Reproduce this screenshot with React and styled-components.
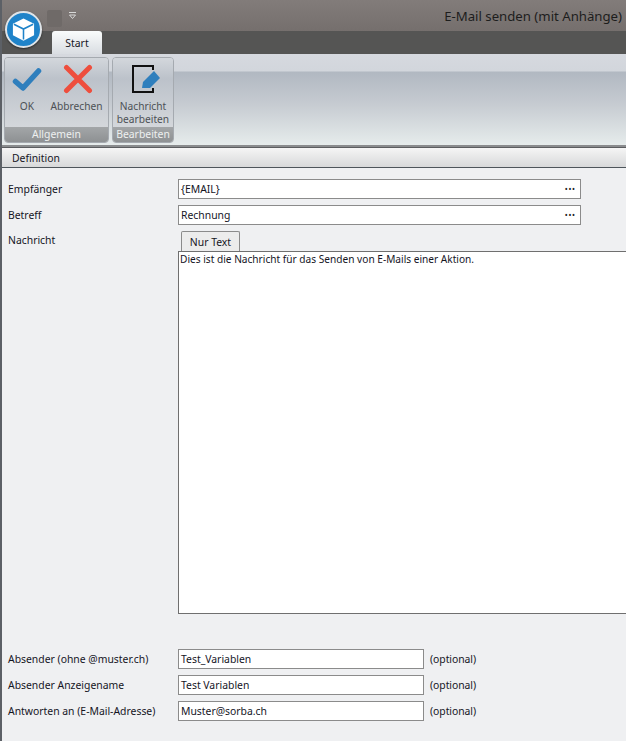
import React from 'react'
import styled, { createGlobalStyle } from "styled-components";

const Global = createGlobalStyle`
  html, body {
    margin: 0;
    padding: 0;
    background: #eff0f2;
  }
  * {
    box-sizing: border-box;
  }
`;

const App = () => {
  return (
    <Window>
      <Global />
      <TitleBar>
        <QuickAccess>
          <QuickSlot />
          <svg width="9" height="9" viewBox="0 0 9 9">
            <path d="M1 1.5h7M1.5 4l3 3.5 3-3.5z" fill="none" stroke="#d8d8d8" strokeWidth="1" />
          </svg>
        </QuickAccess>
        <Title>E-Mail senden (mit Anhänge)</Title>
      </TitleBar>
      <AppButton>
        <svg width="25" height="25" viewBox="0 0 26 26">
          <path d="M13 1.5 24 7v12l-11 5.8L2 19V7z" fill="#fff" />
          <path d="M13 12.5v11M3 7.5l10 5 10-5" fill="none" stroke="#1f83c9" strokeWidth="1.6" />
        </svg>
      </AppButton>
      <TabStrip>
        <RibbonTab>Start</RibbonTab>
      </TabStrip>
      <Ribbon>
        <Group>
          <GroupBody>
            <RibbonButton $width={40}>
              <IconSlot>
                <svg width="30" height="26" viewBox="0 0 30 26">
                  <path d="M3.5 15.5 11 22 26.5 5" fill="none" stroke="#2f7fbd" strokeWidth="5.5" strokeLinecap="round" strokeLinejoin="round" />
                </svg>
              </IconSlot>
              <ButtonLabel>OK</ButtonLabel>
            </RibbonButton>
            <RibbonButton $width={59}>
              <IconSlot $shift={3}>
                <svg width="30" height="30" viewBox="0 0 30 30">
                  <path d="M3.5 3.5 26.5 26.5M26.5 3.5 3.5 26.5" fill="none" stroke="#ee4e3d" strokeWidth="5" strokeLinecap="round" />
                </svg>
              </IconSlot>
              <ButtonLabel>Abbrechen</ButtonLabel>
            </RibbonButton>
          </GroupBody>
          <GroupLabel>Allgemein</GroupLabel>
        </Group>
        <Group>
          <GroupBody>
            <RibbonButton $width={56}>
              <IconSlot $shift={6}>
                <svg width="32" height="30" viewBox="0 0 32 30">
                  <path d="M23 6V2H3v26h20v-4" fill="none" stroke="#111" strokeWidth="2" />
                  <path d="M12 24l1-6L24 7l6 7-10 10z" fill="#2f7fbd" />
                </svg>
              </IconSlot>
              <ButtonLabel>Nachricht<br />bearbeiten</ButtonLabel>
            </RibbonButton>
          </GroupBody>
          <GroupLabel>Bearbeiten</GroupLabel>
        </Group>
      </Ribbon>
      <SectionBar>Definition</SectionBar>
      <Form>
        <Row>
          <Label>Empfänger</Label>
          <Field $wide>
            <span>{"{EMAIL}"}</span>
            <Dots>•••</Dots>
          </Field>
        </Row>
        <Row>
          <Label>Betreff</Label>
          <Field $wide>
            <span>Rechnung</span>
            <Dots>•••</Dots>
          </Field>
        </Row>
        <MessageRow>
          <MessageLabel>Nachricht</MessageLabel>
          <MessageColumn>
            <EditorTab>Nur Text</EditorTab>
            <Editor>Dies ist die Nachricht für das Senden von E-Mails einer Aktion.</Editor>
          </MessageColumn>
        </MessageRow>
        <SenderRows>
          <Row>
            <Label>Absender (ohne @muster.ch)</Label>
            <Field><span>Test_Variablen</span></Field>
            <Hint>(optional)</Hint>
          </Row>
          <Row>
            <Label>Absender Anzeigename</Label>
            <Field><span>Test Variablen</span></Field>
            <Hint>(optional)</Hint>
          </Row>
          <Row>
            <Label>Antworten an (E-Mail-Adresse)</Label>
            <Field><span>Muster@sorba.ch</span></Field>
            <Hint>(optional)</Hint>
          </Row>
        </SenderRows>
      </Form>
    </Window>
  );
}

const Window = styled.div`
  position: relative;
  width: 626px;
  height: 741px;
  overflow: hidden;
  background: #eff0f2;
  font-family: "Noto Sans", "Open Sans", sans-serif;
  font-size: 10.4px;
  color: #15151f;
  border-left: 2px solid #5c6066;
`;

const TitleBar = styled.div`
  height: 31px;
  margin-left: -2px;
  display: flex;
  align-items: center;
  justify-content: space-between;
  padding: 0 4px 0 47px;
  background: linear-gradient(#827c7a, #756f6d);
`;

const QuickAccess = styled.div`
  display: flex;
  align-items: center;
  gap: 6px;
`;

const QuickSlot = styled.div`
  width: 15px;
  height: 17px;
  margin-top: 6px;
  background: #6f6a68;
  border-radius: 2px;
`;

const Title = styled.div`
  font-size: 13.2px;
  color: #1d1d1d;
`;

const AppButton = styled.div`
  position: absolute;
  left: 3px;
  top: 11px;
  width: 37px;
  height: 37px;
  display: flex;
  align-items: center;
  justify-content: center;
  border-radius: 50%;
  background: #1f83c9;
  border: 2px solid #dfe4e8;
  box-shadow: 0 1px 2px rgba(0, 0, 0, 0.5);
`;

const TabStrip = styled.div`
  height: 23px;
  margin-left: -2px;
  padding-left: 52px;
  background: #555554;
  display: flex;
  align-items: flex-end;
`;

const RibbonTab = styled.div`
  width: 50px;
  height: 23px;
  display: flex;
  align-items: center;
  justify-content: center;
  border-radius: 3px 3px 0 0;
  background: linear-gradient(#fafcfc, #d9dde2);
`;

const Ribbon = styled.div`
  height: 93px;
  margin-left: -2px;
  padding: 3px 0 0 4px;
  display: flex;
  gap: 3px;
  background: linear-gradient(#d6d9df 0, #d2d6dc 17px, #b1b8c1 18px, #c6cbd1 55%, #e6ecec 100%);
  border-bottom: 2px solid #8a8c8e;
`;

const Group = styled.div`
  height: 86px;
  display: flex;
  flex-direction: column;
  border: 1px solid #a5aab0;
  border-radius: 4px;
  overflow: hidden;
  box-shadow: inset 0 0 0 1px rgba(255, 255, 255, 0.4);
`;

const GroupBody = styled.div`
  flex: 1;
  display: flex;
  padding: 0 2px;
  background: linear-gradient(#d3d7dc, #bcc2ca 30%, #d4d7db);
`;

const RibbonButton = styled.div`
  width: ${(p) => p.$width}px;
  display: flex;
  flex-direction: column;
  align-items: center;
`;

const IconSlot = styled.div`
  height: 38px;
  display: flex;
  align-items: center;
  justify-content: center;
  padding-top: 4px;
  padding-left: ${(p) => p.$shift || 0}px;
`;

const ButtonLabel = styled.div`
  margin-top: 4px;
  font-size: 10.2px;
  line-height: 13px;
  text-align: center;
  white-space: nowrap;
  color: #4d5156;
`;

const GroupLabel = styled.div`
  height: 15px;
  line-height: 15px;
  text-align: center;
  color: #eef0f0;
  background: linear-gradient(#a3a6a8, #8e9193);
`;

const SectionBar = styled.div`
  height: 21px;
  margin-left: -2px;
  padding-left: 12px;
  line-height: 20px;
  background: linear-gradient(#f5f5f5, #d8d9da);
  border-top: 1px solid #5b5d60;
  border-bottom: 1px solid #4e555b;
`;

const Form = styled.div`
  padding: 11px 0 0 6px;
  display: flex;
  flex-direction: column;
  gap: 6px;
`;

const Row = styled.div`
  display: flex;
  align-items: center;
  height: 20px;
`;

const Label = styled.div`
  width: 170px;
  flex-shrink: 0;
`;

const Field = styled.div`
  width: ${(p) => (p.$wide ? "403px" : "246px")};
  height: 20px;
  display: flex;
  align-items: center;
  justify-content: space-between;
  padding: 0 2px;
  background: #fff;
  border: 1px solid #8b8b8b;
`;

const Dots = styled.span`
  font-size: 6.5px;
  font-weight: 700;
  letter-spacing: 1.2px;
  padding-right: 2px;
  color: #222;
`;

const Hint = styled.div`
  margin-left: 6px;
  letter-spacing: -0.05px;
`;

const MessageRow = styled.div`
  display: flex;
  height: 384px;
`;

const MessageLabel = styled(Label)`
  padding-top: 2px;
`;

const MessageColumn = styled.div`
  flex: 1;
  display: flex;
  flex-direction: column;
  align-items: flex-start;
`;

const EditorTab = styled.div`
  width: 59px;
  height: 20px;
  margin-left: 3px;
  line-height: 20px;
  text-align: center;
  background: #ececec;
  border: 1px solid #8b8b8b;
  border-bottom: 0;
  border-radius: 2px 2px 0 0;
`;

const Editor = styled.div`
  width: 100%;
  height: 363px;
  padding: 0 1px;
  background: #fff;
  border: 1px solid #6f6f6f;
  border-right: 0;
  font-size: 10.15px;
  line-height: 14px;
`;

const SenderRows = styled.div`
  margin-top: 28px;
  display: flex;
  flex-direction: column;
  gap: 6px;
`;

export default App
